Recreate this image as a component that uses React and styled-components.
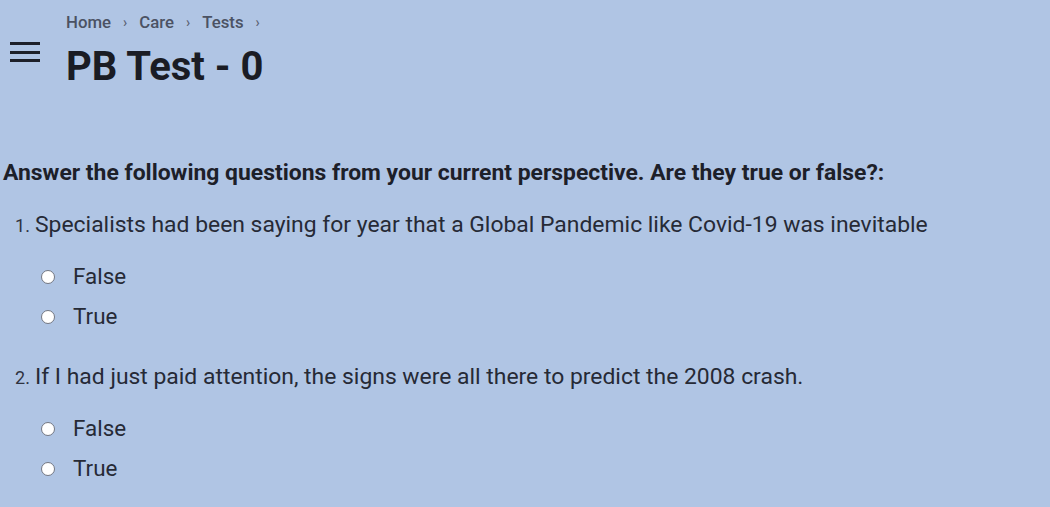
import React from "react";
import styled, { createGlobalStyle } from "styled-components";

const GlobalStyle = createGlobalStyle`
  html, body {
    margin: 0;
    padding: 0;
    background: #b0c5e4;
    font-family: Roboto, "Liberation Sans", sans-serif;
    color: #1d2029;
  }
`;

const Page = styled.div`
  width: 1050px;
  height: 507px;
  overflow: hidden;
  background: #b0c5e4;
`;

const Header = styled.header`
  display: flex;
  align-items: flex-start;
  padding-top: 12px;
`;

const MenuButton = styled.button`
  display: flex;
  flex-direction: column;
  gap: 5.5px;
  margin: 30px 0 0 10px;
  padding: 0;
  border: 0;
  background: none;
  cursor: pointer;
`;

const Bar = styled.span`
  display: block;
  width: 30px;
  height: 3px;
  background: #1d2029;
`;

const TitleBlock = styled.div`
  margin-left: 26px;
`;

const Crumbs = styled.nav`
  display: flex;
  align-items: center;
  gap: 12px;
  font-size: 16.8px;
  font-weight: 500;
  color: #4b5263;
  height: 20px;
`;

const Sep = styled.span`
  font-size: 14px;
  color: #5a6172;
`;

const Title = styled.h1`
  margin: 11px 0 0;
  font-size: 40px;
  font-weight: 700;
  line-height: 48px;
  color: #1a1c24;
`;

const Intro = styled.h2`
  margin: 68px 0 0 3px;
  font-size: 22.9px;
  font-weight: 700;
  line-height: 28px;
`;

const Question = styled.div`
  margin-top: ${(p) => (p.$first ? "23px" : "33px")};
`;

const Prompt = styled.p`
  display: flex;
  align-items: baseline;
  margin: 0 0 0 15px;
  font-size: 22.9px;
  line-height: 30px;
  color: #262a36;
`;

const Num = styled.span`
  width: 20px;
  font-size: 18px;
  color: #2f3340;
`;

const Options = styled.div`
  display: flex;
  flex-direction: column;
  gap: 14px;
  margin: 22px 0 0 41px;
`;

const Option = styled.label`
  display: flex;
  align-items: center;
  gap: 18px;
  font-size: 22.4px;
  line-height: 26px;
  color: #262a36;
`;

const Radio = styled.input.attrs({ type: "radio" })`
  appearance: none;
  box-sizing: border-box;
  width: 14px;
  height: 14px;
  margin: 2px 0 0 0;
  border-radius: 50%;
  border: 1px solid #737782;
  background: #fff;
`;

const questions = [
  "Specialists had been saying for year that a Global Pandemic like Covid-19 was inevitable",
  "If I had just paid attention, the signs were all there to predict the 2008 crash.",
];

export default function App() {
  return (
    <Page>
      <GlobalStyle />
      <Header>
        <MenuButton aria-label="menu">
          <Bar />
          <Bar />
          <Bar />
        </MenuButton>
        <TitleBlock>
          <Crumbs>
            <span>Home</span>
            <Sep>›</Sep>
            <span>Care</span>
            <Sep>›</Sep>
            <span>Tests</span>
            <Sep>›</Sep>
          </Crumbs>
          <Title>PB Test - 0</Title>
        </TitleBlock>
      </Header>
      <Intro>
        Answer the following questions from your current perspective. Are they true or false?:
      </Intro>
      {questions.map((q, i) => (
        <Question key={i} $first={i === 0}>
          <Prompt>
            <Num>{i + 1}.</Num>
            {q}
          </Prompt>
          <Options>
            <Option>
              <Radio name={"q" + i} />
              False
            </Option>
            <Option>
              <Radio name={"q" + i} />
              True
            </Option>
          </Options>
        </Question>
      ))}
    </Page>
  );
}
